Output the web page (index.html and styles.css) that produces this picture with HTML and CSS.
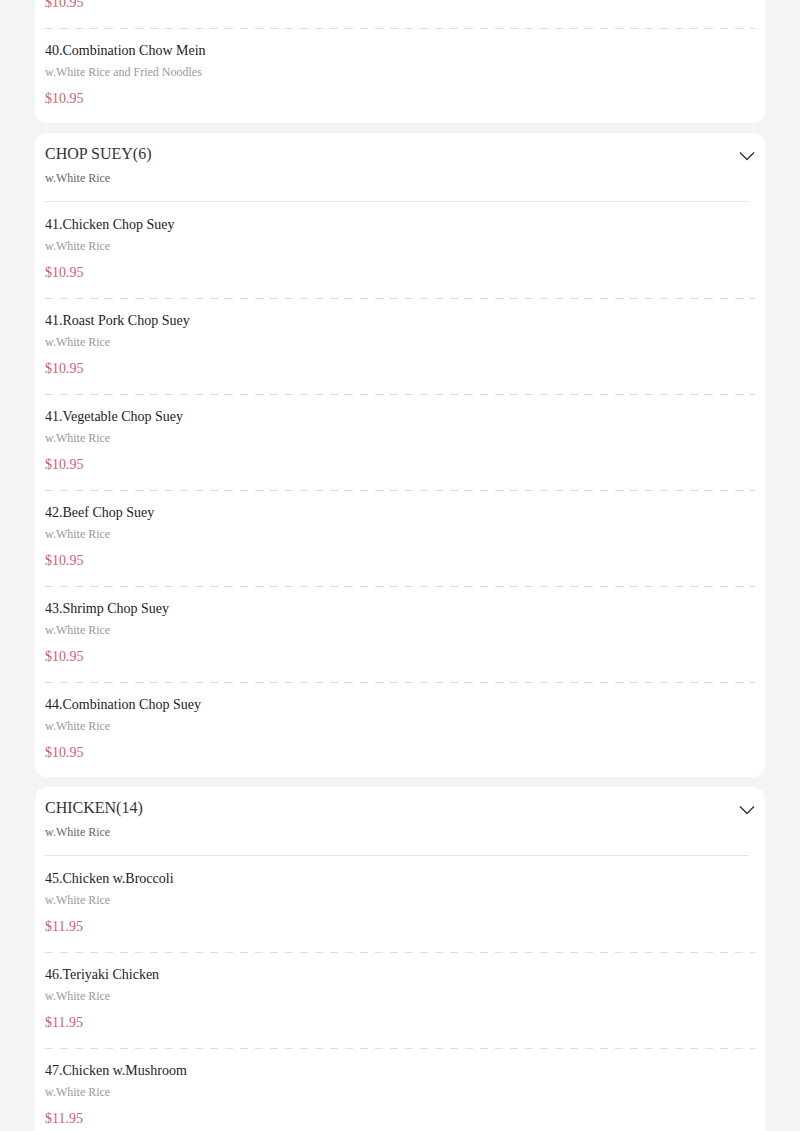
FILE: index.html
```html
<!DOCTYPE html>
<html lang="en">
<head>
<meta charset="utf-8">
<title>Menu</title>
<link rel="stylesheet" href="styles.css">
</head>
<body>
<main class="menu">
  <section class="card card-cut">
    <div class="item item-partial">
      <div class="price">$10.95</div>
    </div>
    <div class="item">
      <div class="name">40.Combination Chow Mein</div>
      <div class="desc">w.White Rice and Fried Noodles</div>
      <div class="price">$10.95</div>
    </div>
  </section>

  <section class="card">
    <header class="cat-head">
      <div class="cat-text">
        <div class="cat-title">CHOP SUEY(6)</div>
        <div class="cat-desc">w.White Rice</div>
      </div>
      <svg class="chev" width="16" height="10" viewBox="0 0 16 10"><path d="M1 1.5 L8 8.5 L15 1.5" fill="none" stroke="#333" stroke-width="1.4"/></svg>
    </header>
    <div class="item">
      <div class="name">41.Chicken Chop Suey</div>
      <div class="desc">w.White Rice</div>
      <div class="price">$10.95</div>
    </div>
    <div class="item">
      <div class="name">41.Roast Pork Chop Suey</div>
      <div class="desc">w.White Rice</div>
      <div class="price">$10.95</div>
    </div>
    <div class="item">
      <div class="name">41.Vegetable Chop Suey</div>
      <div class="desc">w.White Rice</div>
      <div class="price">$10.95</div>
    </div>
    <div class="item">
      <div class="name">42.Beef Chop Suey</div>
      <div class="desc">w.White Rice</div>
      <div class="price">$10.95</div>
    </div>
    <div class="item">
      <div class="name">43.Shrimp Chop Suey</div>
      <div class="desc">w.White Rice</div>
      <div class="price">$10.95</div>
    </div>
    <div class="item">
      <div class="name">44.Combination Chop Suey</div>
      <div class="desc">w.White Rice</div>
      <div class="price">$10.95</div>
    </div>
  </section>

  <section class="card">
    <header class="cat-head">
      <div class="cat-text">
        <div class="cat-title">CHICKEN(14)</div>
        <div class="cat-desc">w.White Rice</div>
      </div>
      <svg class="chev" width="16" height="10" viewBox="0 0 16 10"><path d="M1 1.5 L8 8.5 L15 1.5" fill="none" stroke="#333" stroke-width="1.4"/></svg>
    </header>
    <div class="item">
      <div class="name">45.Chicken w.Broccoli</div>
      <div class="desc">w.White Rice</div>
      <div class="price">$11.95</div>
    </div>
    <div class="item">
      <div class="name">46.Teriyaki Chicken</div>
      <div class="desc">w.White Rice</div>
      <div class="price">$11.95</div>
    </div>
    <div class="item">
      <div class="name">47.Chicken w.Mushroom</div>
      <div class="desc">w.White Rice</div>
      <div class="price">$11.95</div>
    </div>
    <div class="item">
      <div class="name">48.General Tso's Chicken</div>
      <div class="desc">w.White Rice</div>
      <div class="price">$11.95</div>
    </div>
  </section>
</main>
</body>
</html>
```

FILE: styles.css
```css
html, body {
  margin: 0;
  padding: 0;
  background: #f4f4f6;
  font-family: "Liberation Serif", "Times New Roman", serif;
  overflow: hidden;
}

.menu {
  display: flex;
  flex-direction: column;
  gap: 10px;
  padding: 0 35px;
}

.card {
  background: #fff;
  border-radius: 12px;
  padding: 0 10px;
}

.card-cut {
  margin-top: -19px;
}

.cat-head {
  display: flex;
  justify-content: space-between;
  align-items: flex-start;
  padding: 11px 0 15px;
  margin-right: 6px;
  margin-bottom: 1px;
  border-bottom: 1px solid #e6e6e6;
}

.cat-title {
  font-size: 16px;
  line-height: 20px;
  color: #333;
}

.cat-desc {
  margin-top: 6px;
  font-size: 12px;
  line-height: 16px;
  color: #666;
}

.chev {
  margin-top: 7px;
  margin-right: -6px;
}

.item {
  padding: 12px 0 16px;
  background-image: repeating-linear-gradient(to right, #dcdcdc 0 8px, transparent 8px 15px);
  background-size: 100% 1px;
  background-repeat: no-repeat;
  background-position: left bottom;
}

.item:last-child {
  background-image: none;
  padding-bottom: 14px;
}

.item-partial {
  padding-top: 12px;
}

.name {
  font-size: 14px;
  line-height: 20px;
  color: #222;
}

.desc {
  margin-top: 3px;
  font-size: 12px;
  line-height: 16px;
  color: #999;
}

.price {
  margin-top: 9px;
  font-size: 14px;
  line-height: 20px;
  color: #d25e68;
}

.item-partial .price {
  margin-top: 0;
}
```
